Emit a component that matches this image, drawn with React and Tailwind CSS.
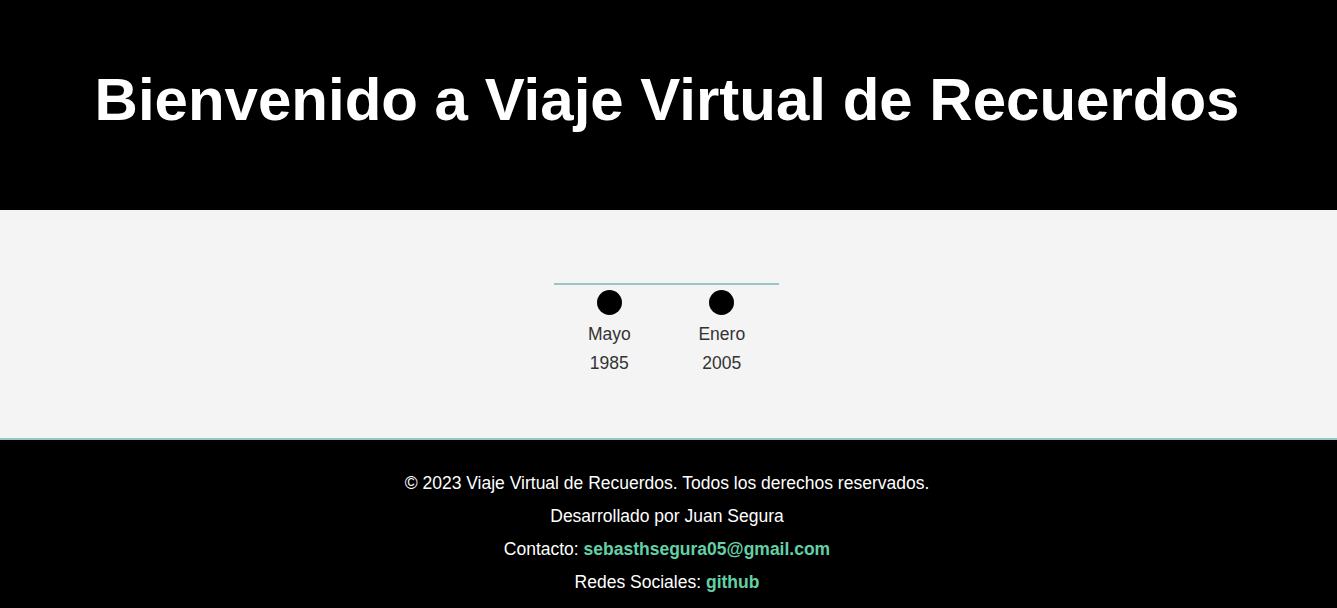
import React from 'react';

const hitos = [
  { id: 1, mes: 'Mayo', anio: '1985' },
  { id: 2, mes: 'Enero', anio: '2005' },
];

const App = () => {
  return (
    <div className="min-h-screen bg-[#f4f4f4] font-['Liberation_Sans',Arial,sans-serif]">
      <header className="h-[210px] bg-black flex items-center justify-center">
        <h1 className="text-white font-bold text-[60px] leading-none -mt-[10px] pr-[3px]">
          Bienvenido a Viaje Virtual de Recuerdos
        </h1>
      </header>

      <main className="h-[228px] pt-[73px] flex justify-center pr-[4px]">
        <div className="w-[225px]">
          <div className="h-[2px] bg-[#99c5c5]" />
          <div className="flex justify-around">
            {hitos.map(h => (
              <div key={h.id} className="flex flex-col items-center">
                <div className="mt-[5px] w-[25px] h-[25px] rounded-full bg-black" />
                <p className="mt-[5px] text-[#333] text-[17.5px] leading-[29px]">{h.mes}</p>
                <p className="text-[#333] text-[17.5px] leading-[29px]">{h.anio}</p>
              </div>
            ))}
          </div>
        </div>
      </main>

      <footer className="bg-black border-t-2 border-[#99c5c5] pt-[27px] pb-[10px] pr-[3px] text-center text-white text-[17.5px]">
        <p className="leading-[33px]">© 2023 Viaje Virtual de Recuerdos. Todos los derechos reservados.</p>
        <p className="leading-[33px]">Desarrollado por Juan Segura</p>
        <p className="leading-[33px]">
          Contacto: <a href="#" className="font-bold text-[#62d1a6]">sebasthsegura05@gmail.com</a>
        </p>
        <p className="leading-[33px]">
          Redes Sociales: <a href="#" className="font-bold text-[#62d1a6]">github</a>
        </p>
      </footer>
    </div>
  );
};

export default App;
